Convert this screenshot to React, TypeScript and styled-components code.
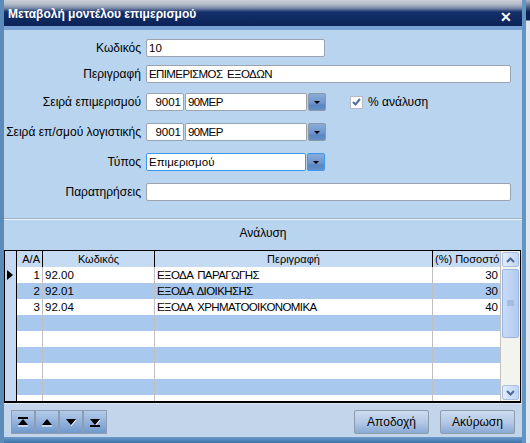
import styled, { createGlobalStyle } from "styled-components";

const GlobalStyle = createGlobalStyle`
  html, body {
    margin: 0;
    padding: 0;
  }
  body {
    width: 530px;
    height: 443px;
    overflow: hidden;
    background: #dfe8f1;
    font-family: "Liberation Sans", Arial, sans-serif;
    font-size: 11px;
    color: #000;
  }
`;

const Screen = styled.div`
  display: flex;
  width: 530px;
  height: 443px;
`;

const Dialog = styled.div`
  width: 526px;
  display: flex;
  flex-direction: column;
  box-sizing: border-box;
  border-left: 4px solid #5b8bb9;
  border-right: 4px solid #6594c3;
`;

const OtherWindow = styled.div`
  flex: 1;
  background: linear-gradient(
    to bottom,
    #aab4c4 0px,
    #0b2257 12px,
    #0b2257 20px,
    #dfe8f1 21px,
    #dfe8f1 100%
  );
`;

const TitleBar = styled.div`
  height: 26px;
  box-sizing: border-box;
  padding: 8px 10px 0 4px;
  display: flex;
  justify-content: space-between;
  align-items: flex-start;
  background: linear-gradient(
    to bottom,
    #c9ced8 0px,
    #b6bdcb 4px,
    #7f8dab 8px,
    #14306a 12px,
    #0b2257 26px
  );
  color: #fff;
  font-weight: bold;
  font-size: 12px;
  line-height: 13px;
`;

const CloseIcon = styled.span`
  font-size: 14px;
  line-height: 14px;
  margin-top: 2px;
`;

const Band = styled.div`
  height: 4px;
  background: #79a1d3;
`;

const Content = styled.div`
  flex: 1;
  display: flex;
  flex-direction: column;
  background: #b9d4ee;
`;

const Form = styled.div`
  padding-top: 9px;
  display: flex;
  flex-direction: column;
`;

const FormRow = styled.div<{ $gap: number }>`
  display: grid;
  grid-template-columns: 137px auto;
  column-gap: 5px;
  align-items: center;
  margin-top: ${(p) => p.$gap}px;
  height: 18px;
`;

const Label = styled.div`
  text-align: right;
  white-space: nowrap;
  font-size: 12px;
`;

const Controls = styled.div`
  display: flex;
  align-items: center;
`;

const Field = styled.div<{ $w: number; $focus?: boolean; $right?: boolean }>`
  box-sizing: border-box;
  width: ${(p) => p.$w}px;
  height: 18px;
  margin-right: 1px;
  background: #fff;
  border: 1px solid ${(p) => (p.$focus ? "#3a9af0" : "#9ba4ae")};
  border-radius: 2px;
  padding: 0 2px;
  line-height: 16px;
  font-size: 11.5px;
  text-align: ${(p) => (p.$right ? "right" : "left")};
  white-space: nowrap;
  overflow: hidden;
`;

const Caps = styled.span`
  letter-spacing: -0.6px;
  word-spacing: 2px;
`;

const DropButton = styled.div<{ $focus?: boolean }>`
  box-sizing: border-box;
  width: 18px;
  height: 18px;
  border: 1px solid ${(p) => (p.$focus ? "#3a9af0" : "#8c98a8")};
  border-radius: 2px;
  background: linear-gradient(to bottom, #89abd9 0%, #6f97cd 55%, #5a85c0 70%, #6590c8 100%);
  display: flex;
  align-items: center;
  justify-content: center;
  &::after {
    content: "";
    border-left: 3px solid transparent;
    border-right: 3px solid transparent;
    border-top: 3px solid #000;
  }
`;

const CheckWrap = styled.div`
  display: flex;
  align-items: center;
  gap: 5px;
  margin-left: 24px;
  font-size: 12px;
`;

const CheckBox = styled.div`
  box-sizing: border-box;
  width: 13px;
  height: 13px;
  background: #fff;
  border: 1px solid #b4bcc6;
  display: flex;
  align-items: center;
  justify-content: center;
`;

const Separator = styled.div`
  margin-top: 17px;
  height: 1px;
  background: #9db3c9;
  border-bottom: 1px solid #eef4fb;
`;

const SectionTitle = styled.div`
  text-align: center;
  margin-top: 6px;
  height: 24px;
  line-height: 14px;
  font-size: 12px;
`;

const Grid = styled.div`
  margin-right: 1px;
  height: 153px;
  box-sizing: border-box;
  border: 1px solid #000;
  border-bottom-width: 2px;
  display: flex;
  background: #fff;
  overflow: hidden;
`;

const Table = styled.div`
  flex: 1;
  display: flex;
  flex-direction: column;
  overflow: hidden;
`;

const Row = styled.div<{ $alt?: boolean; $head?: boolean }>`
  display: grid;
  grid-template-columns: 12px 26px 112px 278px 68px;
  height: 16px;
  flex-shrink: 0;
  background: ${(p) => (p.$head ? "#c5dbf3" : p.$alt ? "#a9c8ee" : "#fff")};
`;

const Cell = styled.div<{ $head?: boolean; $align?: "left" | "right" | "center" }>`
  border-right: 1px solid ${(p) => (p.$head ? "#000" : "#c0c0c0")};
  padding: 0 2px;
  line-height: 16px;
  font-size: ${(p) => (p.$head ? 11 : 11.5)}px;
  text-align: ${(p) => p.$align || "left"};
  white-space: nowrap;
  overflow: hidden;
`;

const Indicator = styled.div`
  background: #c5daf2;
  border-right: 1px solid #000;
  display: flex;
  align-items: center;
  padding-left: 2px;
`;

const ScrollBar = styled.div`
  width: 19px;
  background: #f4f4ef;
  border-left: 1px solid #c0c0c0;
  display: flex;
  flex-direction: column;
  align-items: center;
`;

const ScrollButton = styled.div`
  box-sizing: border-box;
  width: 17px;
  height: 15px;
  margin: 1px 0;
  border: 1px solid #a9c0e4;
  border-radius: 2px;
  background: linear-gradient(to right, #e2ecfb, #c0d5f4);
  display: flex;
  align-items: center;
  justify-content: center;
`;

const Thumb = styled.div`
  box-sizing: border-box;
  width: 17px;
  height: 69px;
  margin-top: 1px;
  border: 1px solid #9bb6e2;
  border-radius: 2px;
  background: linear-gradient(to right, #c9dbf8, #b3cbf1);
  display: flex;
  align-items: center;
  justify-content: center;
`;

const Spacer = styled.div`
  flex: 1;
`;

const BottomBar = styled.div`
  flex: 1;
  background: #c3d5ea;
  border-top: 1px solid #dde8f4;
  display: flex;
  align-items: flex-start;
  justify-content: space-between;
  padding: 6px 7px 0 7px;
`;

const NavGroup = styled.div`
  display: flex;
`;

const NavButton = styled.div`
  box-sizing: border-box;
  width: 24px;
  height: 24px;
  border: 1px solid #8e9db2;
  background: linear-gradient(to bottom, #b4cbe8 0%, #93b2dc 50%, #7099cc 100%);
  display: flex;
  align-items: center;
  justify-content: center;
`;

const Actions = styled.div`
  display: flex;
  gap: 11px;
`;

const ActionButton = styled.div`
  box-sizing: border-box;
  width: 75px;
  height: 24px;
  border: 1px solid #8e9bab;
  border-radius: 2px;
  background: linear-gradient(to bottom, #cbdcf0 0%, #b4c9e6 50%, #8aa9d4 100%);
  font-size: 12px;
  line-height: 22px;
  text-align: center;
`;

const BottomEdge = styled.div`
  height: 6px;
  background: linear-gradient(to bottom, #6d9acb, #3f74a9);
`;

const rows = [
  { aa: "1", code: "92.00", desc: "ΕΞΟΔΑ ΠΑΡΑΓΩΓΗΣ", pct: "30" },
  { aa: "2", code: "92.01", desc: "ΕΞΟΔΑ ΔΙΟΙΚΗΣΗΣ", pct: "30" },
  { aa: "3", code: "92.04", desc: "ΕΞΟΔΑ ΧΡΗΜΑΤΟΟΙΚΟΝΟΜΙΚΑ", pct: "40" },
  null,
  null,
  null,
  null,
  null,
  null,
];

function Chevron({ up }: { up?: boolean }) {
  return (
    <svg width="9" height="6" viewBox="0 0 9 6">
      <path
        d={up ? "M1 5 L4.5 1.5 L8 5" : "M1 1 L4.5 4.5 L8 1"}
        fill="none"
        stroke="#4a6a9c"
        strokeWidth="2"
      />
    </svg>
  );
}

function NavIcon({ kind }: { kind: "first" | "up" | "down" | "last" }) {
  const up = kind === "first" || kind === "up";
  return (
    <svg width="14" height="12" viewBox="0 0 14 12">
      {kind === "first" && <rect x="2" y="1" width="10" height="2" fill="#000" />}
      {up ? (
        <>
          <polygon points="7,3 12,9 2,9" fill="#000" />
          <line x1="2" y1="10" x2="12" y2="10" stroke="#fff" strokeWidth="1" />
        </>
      ) : (
        <>
          <polygon points="2,3 12,3 7,9" fill="#000" />
          <line x1="7" y1="10" x2="12" y2="4" stroke="#fff" strokeWidth="1" />
        </>
      )}
      {kind === "last" && <rect x="2" y="9" width="10" height="2" fill="#000" />}
    </svg>
  );
}

export default function App() {
  return (
    <>
      <GlobalStyle />
      <Screen>
        <Dialog>
          <TitleBar>
            <span>Μεταβολή μοντέλου επιμερισμού</span>
            <CloseIcon>✕</CloseIcon>
          </TitleBar>
          <Band />
          <Content>
            <Form>
              <FormRow $gap={0}>
                <Label>Κωδικός</Label>
                <Controls>
                  <Field $w={179}>10</Field>
                </Controls>
              </FormRow>
              <FormRow $gap={8}>
                <Label>Περιγραφή</Label>
                <Controls>
                  <Field $w={365}>
                    <Caps>ΕΠΙΜΕΡΙΣΜΟΣ ΕΞΟΔΩΝ</Caps>
                  </Field>
                </Controls>
              </FormRow>
              <FormRow $gap={10}>
                <Label>Σειρά επιμερισμού</Label>
                <Controls>
                  <Field $w={38} $right>
                    9001
                  </Field>
                  <Field $w={122}>
                    <Caps>90ΜΕΡ</Caps>
                  </Field>
                  <DropButton />
                  <CheckWrap>
                    <CheckBox>
                      <svg width="9" height="8" viewBox="0 0 9 8">
                        <path d="M1 4 L3.5 6.5 L8 1" fill="none" stroke="#4f6f9e" strokeWidth="2" />
                      </svg>
                    </CheckBox>
                    <span>% ανάλυση</span>
                  </CheckWrap>
                </Controls>
              </FormRow>
              <FormRow $gap={12}>
                <Label>Σειρά επ/σμού λογιστικής</Label>
                <Controls>
                  <Field $w={38} $right>
                    9001
                  </Field>
                  <Field $w={122}>
                    <Caps>90ΜΕΡ</Caps>
                  </Field>
                  <DropButton />
                </Controls>
              </FormRow>
              <FormRow $gap={12}>
                <Label>Τύπος</Label>
                <Controls>
                  <Field $w={160} $focus>
                    Επιμερισμού
                  </Field>
                  <DropButton $focus />
                </Controls>
              </FormRow>
              <FormRow $gap={12}>
                <Label>Παρατηρήσεις</Label>
                <Controls>
                  <Field $w={365} />
                </Controls>
              </FormRow>
            </Form>
            <Separator />
            <SectionTitle>Ανάλυση</SectionTitle>
            <Grid>
              <Table>
                <Row $head>
                  <Indicator />
                  <Cell $head $align="right">
                    Α/Α
                  </Cell>
                  <Cell $head $align="center">
                    Κωδικός
                  </Cell>
                  <Cell $head $align="center">
                    Περιγραφή
                  </Cell>
                  <Cell $head $align="center">
                    (%) Ποσοστό
                  </Cell>
                </Row>
                {rows.map((r, i) => (
                  <Row key={i} $alt={i % 2 === 1}>
                    <Indicator>
                      {i === 0 && (
                        <svg width="6" height="10" viewBox="0 0 6 10">
                          <polygon points="0,0 6,5 0,10" fill="#000" />
                        </svg>
                      )}
                    </Indicator>
                    <Cell $align="right">{r?.aa}</Cell>
                    <Cell>{r?.code}</Cell>
                    <Cell>{r && <Caps>{r.desc}</Caps>}</Cell>
                    <Cell $align="right">{r?.pct}</Cell>
                  </Row>
                ))}
              </Table>
              <ScrollBar>
                <ScrollButton>
                  <Chevron up />
                </ScrollButton>
                <Thumb>
                  <svg width="7" height="7" viewBox="0 0 7 7">
                    <path d="M0 1 H7 M0 3 H7 M0 5 H7" stroke="#8aa6d8" strokeWidth="1" />
                  </svg>
                </Thumb>
                <Spacer />
                <ScrollButton>
                  <Chevron />
                </ScrollButton>
              </ScrollBar>
            </Grid>
            <BottomBar>
              <NavGroup>
                <NavButton>
                  <NavIcon kind="first" />
                </NavButton>
                <NavButton>
                  <NavIcon kind="up" />
                </NavButton>
                <NavButton>
                  <NavIcon kind="down" />
                </NavButton>
                <NavButton>
                  <NavIcon kind="last" />
                </NavButton>
              </NavGroup>
              <Actions>
                <ActionButton>Αποδοχή</ActionButton>
                <ActionButton>Ακύρωση</ActionButton>
              </Actions>
            </BottomBar>
          </Content>
          <BottomEdge />
        </Dialog>
        <OtherWindow />
      </Screen>
    </>
  );
}
